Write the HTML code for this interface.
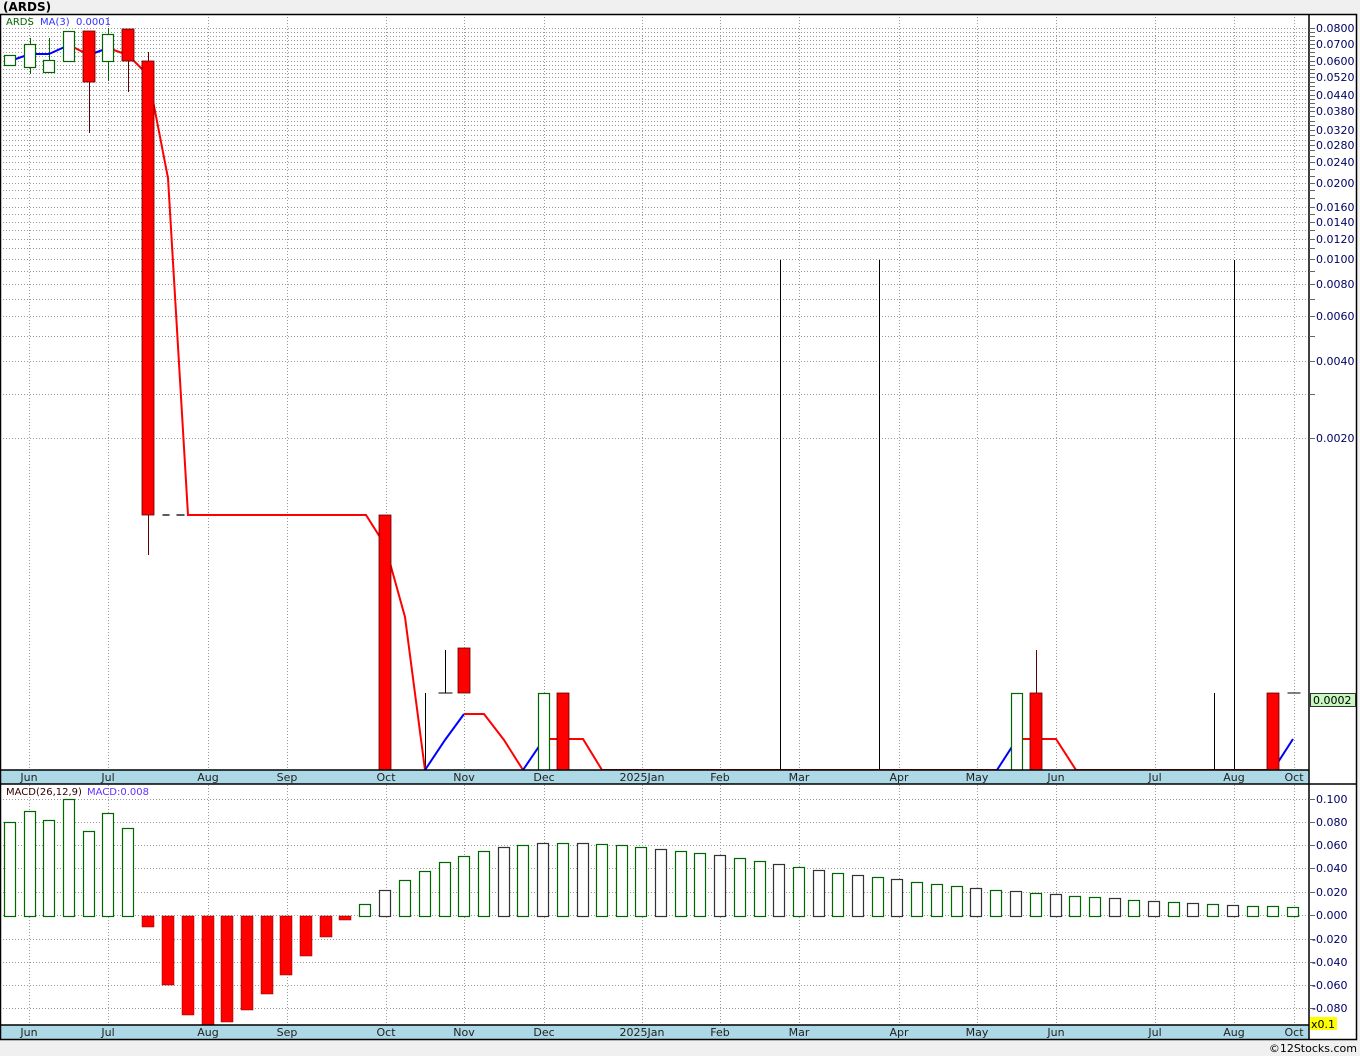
<!DOCTYPE html>
<html><head><meta charset="utf-8"><style>
html,body{margin:0;padding:0;background:#f0f0f0;}
svg{display:block;font-family:"DejaVu Sans","Liberation Sans",sans-serif;}
</style></head><body>
<svg id="s" width="1360" height="1056" xmlns="http://www.w3.org/2000/svg">
<rect x="0" y="0" width="1360" height="1056" fill="#f0f0f0"/>
<text x="3" y="11" font-size="12" font-weight="bold" fill="#000">(ARDS)</text>
<rect x="0" y="14" width="1357" height="1026" fill="#fff"/>
<g id="grid" stroke="#999" stroke-width="1" stroke-dasharray="1,2"></g>
<g id="draw"></g>
<rect x="0" y="770" width="1309" height="14" fill="#add8e6"/>
<rect x="0" y="1025" width="1309" height="15" fill="#add8e6"/>
<g font-size="11" fill="#222" text-anchor="middle">
<text x="29" y="781">Jun</text><text x="108" y="781">Jul</text><text x="208" y="781">Aug</text><text x="287" y="781">Sep</text><text x="386" y="781">Oct</text><text x="464" y="781">Nov</text><text x="544" y="781">Dec</text><text x="642" y="781">2025Jan</text><text x="720" y="781">Feb</text><text x="799" y="781">Mar</text><text x="899" y="781">Apr</text><text x="977" y="781">May</text><text x="1056" y="781">Jun</text><text x="1155" y="781">Jul</text><text x="1234" y="781">Aug</text><text x="1294" y="781">Oct</text>
<text x="29" y="1036">Jun</text><text x="108" y="1036">Jul</text><text x="208" y="1036">Aug</text><text x="287" y="1036">Sep</text><text x="386" y="1036">Oct</text><text x="464" y="1036">Nov</text><text x="544" y="1036">Dec</text><text x="642" y="1036">2025Jan</text><text x="720" y="1036">Feb</text><text x="799" y="1036">Mar</text><text x="899" y="1036">Apr</text><text x="977" y="1036">May</text><text x="1056" y="1036">Jun</text><text x="1155" y="1036">Jul</text><text x="1234" y="1036">Aug</text><text x="1294" y="1036">Oct</text>
</g>
<g stroke="#000" stroke-width="1.5" fill="none">
<rect x="0.5" y="14.5" width="1356" height="1025"/>
<line x1="1309" y1="14" x2="1309" y2="1040"/>
<line x1="0" y1="770" x2="1309" y2="770"/>
<line x1="0" y1="784" x2="1357" y2="784"/>
<line x1="0" y1="1025" x2="1309" y2="1025"/>
</g>
<g id="ticks" stroke="#666"></g>
<g font-size="11" fill="#000066">
<text x="1316" y="32">0.0800</text><text x="1316" y="48">0.0700</text><text x="1316" y="65">0.0600</text><text x="1316" y="81">0.0520</text><text x="1316" y="99">0.0440</text><text x="1316" y="115">0.0380</text><text x="1316" y="134">0.0320</text><text x="1316" y="149">0.0280</text><text x="1316" y="166">0.0240</text><text x="1316" y="187">0.0200</text><text x="1316" y="211">0.0160</text><text x="1316" y="226">0.0140</text><text x="1316" y="243">0.0120</text><text x="1316" y="263">0.0100</text><text x="1316" y="288">0.0080</text><text x="1316" y="320">0.0060</text><text x="1316" y="365">0.0040</text><text x="1316" y="442">0.0020</text>
<text x="1316" y="803">0.100</text><text x="1316" y="826">0.080</text><text x="1316" y="849">0.060</text><text x="1316" y="872">0.040</text><text x="1316" y="896">0.020</text><text x="1316" y="919">0.000</text><text x="1312" y="943">-0.020</text><text x="1312" y="966">-0.040</text><text x="1312" y="989">-0.060</text><text x="1312" y="1012">-0.080</text>
</g>
<rect x="1310.5" y="693.5" width="45" height="13" fill="#c8f7c0" stroke="#333"/>
<text x="1313" y="704" font-size="11" fill="#000">0.0002</text>
<rect x="1310" y="1017" width="27" height="13" fill="#ffff00"/>
<text x="1311" y="1028" font-size="11" fill="#000">x0.1</text>
<text x="6" y="25" font-size="10" fill="#006600">ARDS</text>
<text x="40" y="25" font-size="10" fill="#3333ff">MA(3)</text>
<text x="76" y="25" font-size="10" fill="#3333ff">0.0001</text>
<text x="6" y="795" font-size="10" fill="#330000">MACD(26,12,9)</text>
<text x="87" y="795" font-size="10" fill="#6633ff">MACD:0.008</text>
<text x="1357" y="1052" font-size="11" fill="#000" text-anchor="end">©12Stocks.com</text>
</svg>
<script>
var NS="http://www.w3.org/2000/svg";
function el(p,t,a){var e=document.createElementNS(NS,t);for(var k in a)e.setAttribute(k,a[k]);p.appendChild(e);return e;}
var g=document.getElementById('grid'),d=document.getElementById('draw'),tk=document.getElementById('ticks');
var months=[29,108,208,287,386,464,544,642,720,799,899,977,1056,1155,1234,1294];
months.forEach(function(x){el(g,'line',{x1:x+0.5,y1:14,x2:x+0.5,y2:1040});});
var hy=[28,32,36,40,44,48,52,56,61,65,69,73,77,82,86,90,95,99,103,107,111,116,121,125,130,135,140,145,150,156,162,169,176,183,190,198,207,214,222,230,239,248,259,271,284,299,316,336,361,394,438];
hy.forEach(function(y){el(g,'line',{x1:0,y1:y+0.5,x2:1309,y2:y+0.5});el(tk,'line',{x1:1309,y1:y+0.5,x2:1315,y2:y+0.5});});
[799,822,845,868,892,915,939,962,985,1008].forEach(function(y){el(g,'line',{x1:0,y1:y+0.5,x2:1309,y2:y+0.5});el(tk,'line',{x1:1309,y1:y+0.5,x2:1315,y2:y+0.5});});
var mb=[[10,822,'g'],[30,811,'g'],[49,820,'g'],[69,799,'g'],[89,831,'g'],[108,813,'g'],[128,828,'g'],[148,927,'r'],[168,985,'r'],[188,1015,'r'],[208,1025,'r'],[227,1022,'r'],[247,1010,'r'],[267,994,'r'],[286,975,'r'],[306,956,'r'],[326,937,'r'],[345,920,'r'],[365,904,'g'],[385,890,'w'],[405,880,'g'],[425,871,'g'],[445,862,'g'],[464,856,'g'],[484,851,'g'],[504,847,'w'],[523,845,'g'],[543,843,'w'],[563,843,'g'],[583,843,'w'],[602,844,'g'],[622,845,'g'],[641,847,'g'],[661,849,'w'],[681,851,'g'],[700,853,'g'],[720,855,'w'],[740,858,'g'],[760,861,'g'],[779,864,'w'],[799,867,'g'],[819,870,'w'],[838,873,'g'],[858,875,'w'],[878,877,'g'],[897,879,'w'],[917,882,'g'],[937,884,'g'],[957,886,'g'],[976,888,'w'],[996,890,'g'],[1016,891,'w'],[1036,893,'g'],[1056,894,'w'],[1075,896,'g'],[1095,897,'g'],[1115,898,'w'],[1134,900,'g'],[1154,901,'w'],[1174,902,'g'],[1193,903,'w'],[1213,904,'g'],[1233,905,'w'],[1253,906,'g'],[1273,906,'g'],[1293,907,'g']];
mb.forEach(function(b){var x=b[0]-6,z=916;
 if(b[2]=='r'){el(d,'rect',{x:x,y:z,width:12,height:b[1]-z,fill:'#ff0000',stroke:'#800000','stroke-width':0.5});}
 else el(d,'rect',{x:x+0.5,y:b[1]+0.5,width:11,height:z-b[1],fill:'#fff',stroke:b[2]=='w'?'#333':'#006600','stroke-width':1.2});});
function ln(x1,y1,x2,y2,c,w){el(d,'line',{x1:x1+0.5,y1:y1,x2:x2+0.5,y2:y2,stroke:c,'stroke-width':w||1});}
[[30,38,74],[49,38,72],[108,28,81]].forEach(function(a){ln(a[0],a[1],a[0],a[2],'#006600');});
ln(89,31,89,133,'#600000');ln(128,29,128,92,'#600000');ln(148,52,148,555,'#600000');ln(1036,650,1036,770,'#600000');
ln(425,693,425,770,'#000');ln(445,650,445,693,'#000');ln(438,693,452,693,'#000');
ln(780,260,780,770,'#000');ln(879,260,879,770,'#000');ln(1234,260,1234,770,'#000');ln(1214,693,1214,770,'#000');
ln(1287,693,1300,693,'#000');ln(162,515,169,515,'#000',1.3);ln(176,515,184,515,'#000',1.3);
function pl(pts,c){el(d,'polyline',{points:pts,fill:'none',stroke:c,'stroke-width':2});}
pl("10,61 30,54 49,54 69,45",'#0000ff');pl("69,45 89,55",'#ff0000');pl("89,55 108,48",'#0000ff');
pl("108,48 128,55 148,75 168,178 188,515 366,515 385,545 405,617 425,770",'#ff0000');
pl("425,770 445,740 464,714",'#0000ff');pl("464,714 484,714 504,740 523,770",'#ff0000');
pl("523,770 544,739",'#0000ff');pl("544,739 583,739 602,770 997,770",'#ff0000');
pl("997,770 1017,739",'#0000ff');pl("1017,739 1056,739 1076,770 1273,770",'#ff0000');pl("1273,770 1293,739",'#0000ff');
function cw(x,y1,y2){el(d,'rect',{x:x-6+0.5,y:y1+0.5,width:11,height:y2-y1,fill:'#fff',stroke:'#006600','stroke-width':1.2});}
function cr(x,y1,y2){el(d,'rect',{x:x-6,y:y1,width:12,height:y2-y1,fill:'#ff0000',stroke:'#600000','stroke-width':0.8});}
cw(10,55,65);cw(30,44,67);cw(49,60,72);cw(69,31,61);cw(108,34,61);cw(544,693,770);cw(1017,693,770);
cr(89,31,82);cr(128,29,61);cr(148,61,515);cr(385,515,770);cr(464,648,693);cr(563,693,770);cr(1036,693,770);cr(1273,693,770);
</script>
</body></html>
